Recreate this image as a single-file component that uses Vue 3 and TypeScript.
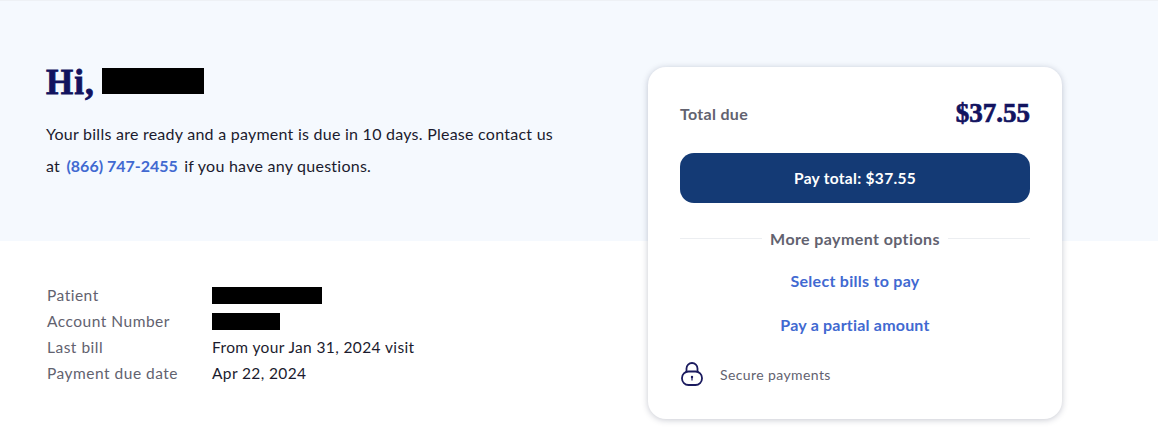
<script setup lang="ts">
interface Row { label: string; value?: string; redact?: number }
const rows: Row[] = [
  { label: 'Patient', redact: 110 },
  { label: 'Account Number', redact: 68 },
  { label: 'Last bill', value: 'From your Jan 31, 2024 visit' },
  { label: 'Payment due date', value: 'Apr 22, 2024' },
]
</script>

<template>
  <div class="page">
    <main class="left">
      <h1 class="greet"><span class="hi">Hi,</span> <span class="redact name"></span></h1>
      <p class="intro">Your bills are ready and a payment is due in 10 days. Please contact us<br />at <a class="phone">(866) 747-2455</a> if you have any questions.</p>
      <dl class="details">
        <div v-for="row in rows" :key="row.label" class="row">
          <dt>{{ row.label }}</dt>
          <dd>
            <span v-if="row.redact" class="redact bar" :style="{ width: row.redact + 'px' }"></span>
            <template v-else>{{ row.value }}</template>
          </dd>
        </div>
      </dl>
    </main>
    <aside class="card">
      <div class="total">
        <span class="total-label">Total due</span>
        <span class="total-amount">$37.55</span>
      </div>
      <button class="pay">Pay total: $37.55</button>
      <div class="divider"><span>More payment options</span></div>
      <a class="option first">Select bills to pay</a>
      <a class="option">Pay a partial amount</a>
      <div class="secure">
        <svg width="24" height="24" viewBox="0 0 24 24" fill="none" stroke="#1a1a5e" stroke-width="1.8">
          <path d="M6.5 10V6.5a5.5 5.5 0 0 1 11 0V10" />
          <rect x="2" y="9.5" width="20" height="13.5" rx="6.5" />
          <circle cx="12" cy="15" r="1.2" fill="#1a1a5e" stroke="none" />
          <path d="M12 15.5v3" stroke-width="1.2" />
        </svg>
        <span>Secure payments</span>
      </div>
    </aside>
  </div>
</template>

<style>
html, body { margin: 0; background: #fff; }
</style>

<style scoped>
.page {
  box-sizing: border-box;
  height: 439px;
  overflow: hidden;
  display: flex;
  justify-content: space-between;
  padding: 66px 96px 0 46px;
  border-top: 1px solid #eef1f5;
  background: linear-gradient(#f5f9fe 240px, #fff 240px);
  font-family: Lato, "Noto Sans", sans-serif;
  color: #1b1b2e;
}
.left { width: 560px; }
.greet {
  margin: 0;
  height: 27px;
  display: flex;
  align-items: center;
  gap: 7px;
  font-family: "Liberation Serif", serif;
  font-weight: 700;
  font-size: 35px;
  letter-spacing: 1px;
  color: #12135f;
  -webkit-text-stroke: 0.8px #12135f;
}
.hi { padding-top: 4px; }
.redact { display: block; background: #000; }
.name { width: 102px; height: 26px; }
.intro {
  margin: 24px 0 0;
  font-size: 16px;
  line-height: 32px;
  letter-spacing: 0.25px;
}
.phone { margin: 0 2px; color: #4169d1; font-weight: 700; letter-spacing: 0; }
.details { margin: 100px 0 0 1px; }
.row { display: flex; height: 26px; align-items: center; font-size: 15.5px; letter-spacing: 0.38px; }
dt { width: 165px; color: #62626f; letter-spacing: 0.5px; }
dd { margin: 0; }
.bar { height: 17px; }
.card {
  box-sizing: border-box;
  width: 414px;
  height: 352px;
  padding: 31px 32px 0;
  background: #fff;
  border-radius: 18px;
  box-shadow: 0 1px 6px rgba(30, 40, 70, 0.25);
}
.total { display: flex; justify-content: space-between; align-items: center; height: 30px; }
.total-label { font-weight: 700; font-size: 16px; letter-spacing: 0.3px; color: #62626f; }
.total-amount {
  font-family: "Liberation Serif", serif;
  font-weight: 700;
  font-size: 27px;
  color: #12135f;
  -webkit-text-stroke: 0.7px #12135f;
}
.pay {
  display: block;
  width: 100%;
  height: 50px;
  margin-top: 25px;
  border: 0;
  border-radius: 14px;
  background: #143a75;
  color: #fff;
  font: 700 15.5px Lato, "Noto Sans", sans-serif;
  letter-spacing: 0.3px;
}
.divider {
  display: flex;
  align-items: center;
  gap: 8px;
  height: 24px;
  margin-top: 23px;
  font-weight: 700;
  font-size: 16px;
  letter-spacing: 0.4px;
  color: #62626f;
}
.divider::before, .divider::after { content: ""; flex: 1; height: 1px; background: #eceef1; }
.option {
  display: block;
  height: 24px;
  line-height: 24px;
  margin-top: 20px;
  text-align: center;
  font-weight: 700;
  font-size: 16px;
  letter-spacing: 0.2px;
  color: #4169d1;
}
.option.first { margin-top: 19px; letter-spacing: 0.28px; }
.secure {
  display: flex;
  align-items: center;
  gap: 16px;
  margin-top: 25px;
  font-size: 14px;
  letter-spacing: 0.4px;
  color: #62626f;
}
</style>
